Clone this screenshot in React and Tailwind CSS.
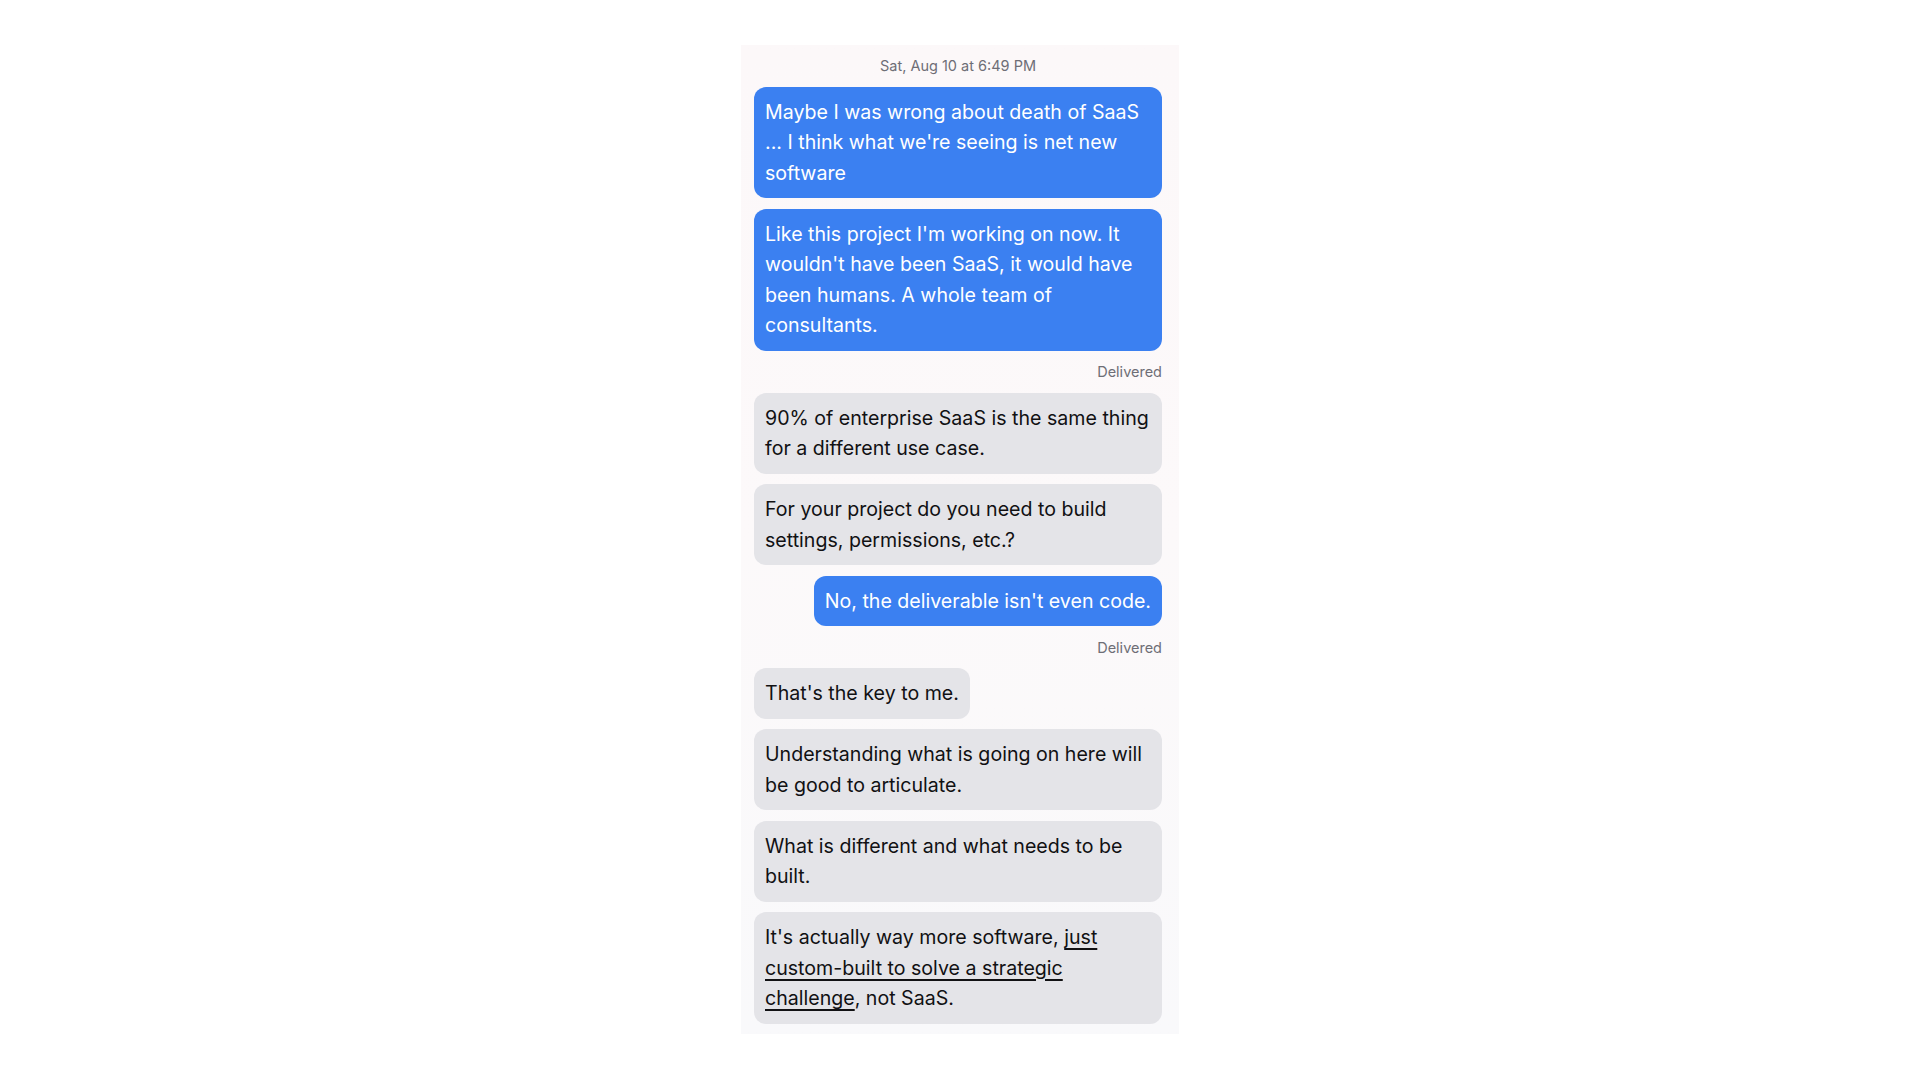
import React from "react";

const messages = [
  { from: "me", text: "Maybe I was wrong about death of SaaS ... I think what we're seeing is net new software" },
  { from: "me", text: "Like this project I'm working on now. It wouldn't have been SaaS, it would have been humans. A whole team of consultants.", delivered: true },
  { from: "them", text: "90% of enterprise SaaS is the same thing for a different use case." },
  { from: "them", text: "For your project do you need to build settings, permissions, etc.?" },
  { from: "me", text: "No, the deliverable isn't even code.", delivered: true },
  { from: "them", text: "That's the key to me." },
  { from: "them", text: "Understanding what is going on here will be good to articulate." },
  { from: "them", text: "What is different and what needs to be built." },
  {
    from: "them",
    text: (
      <>
        It's actually way more software,{" "}
        <span className="underline decoration-[1.5px] underline-offset-[4px]">
          just custom-built to solve a strategic challenge
        </span>
        , not SaaS.
      </>
    ),
  },
];

function Bubble({ from, text }) {
  const mine = from === "me";
  return (
    <div className={`flex ${mine ? "justify-end" : "justify-start"}`}>
      <div
        className={`max-w-full rounded-xl px-[11px] py-[10px] text-[19.6px] leading-[30.5px] ${
          mine ? "bg-[#3b80f1] text-white" : "bg-[#e4e4e8] text-[#111113]"
        }`}
      >
        {text}
      </div>
    </div>
  );
}

export default function App() {
  return (
    <div
      className="w-full min-h-screen bg-white flex justify-center pt-[45px]"
      style={{ fontFamily: "Inter, 'Noto Sans', sans-serif" }}
    >
      <div className="w-[438px] h-[989px] bg-gradient-to-b from-[#fcf8f9] via-[#fcf9fa] to-[#f9f9fb] pl-[13px] pr-[17px] pt-[10px] pb-[11px] flex flex-col gap-[10.5px]">
        <div className="text-center text-[14.5px] leading-[21px] text-[#6e6e76]">
          Sat, Aug 10 at 6:49 PM
        </div>
        {messages.map((m, i) => (
          <React.Fragment key={i}>
            <Bubble {...m} />
            {m.delivered && (
              <div className="text-right text-[14.5px] leading-[21px] text-[#6e6e76]">
                Delivered
              </div>
            )}
          </React.Fragment>
        ))}
      </div>
    </div>
  );
}
